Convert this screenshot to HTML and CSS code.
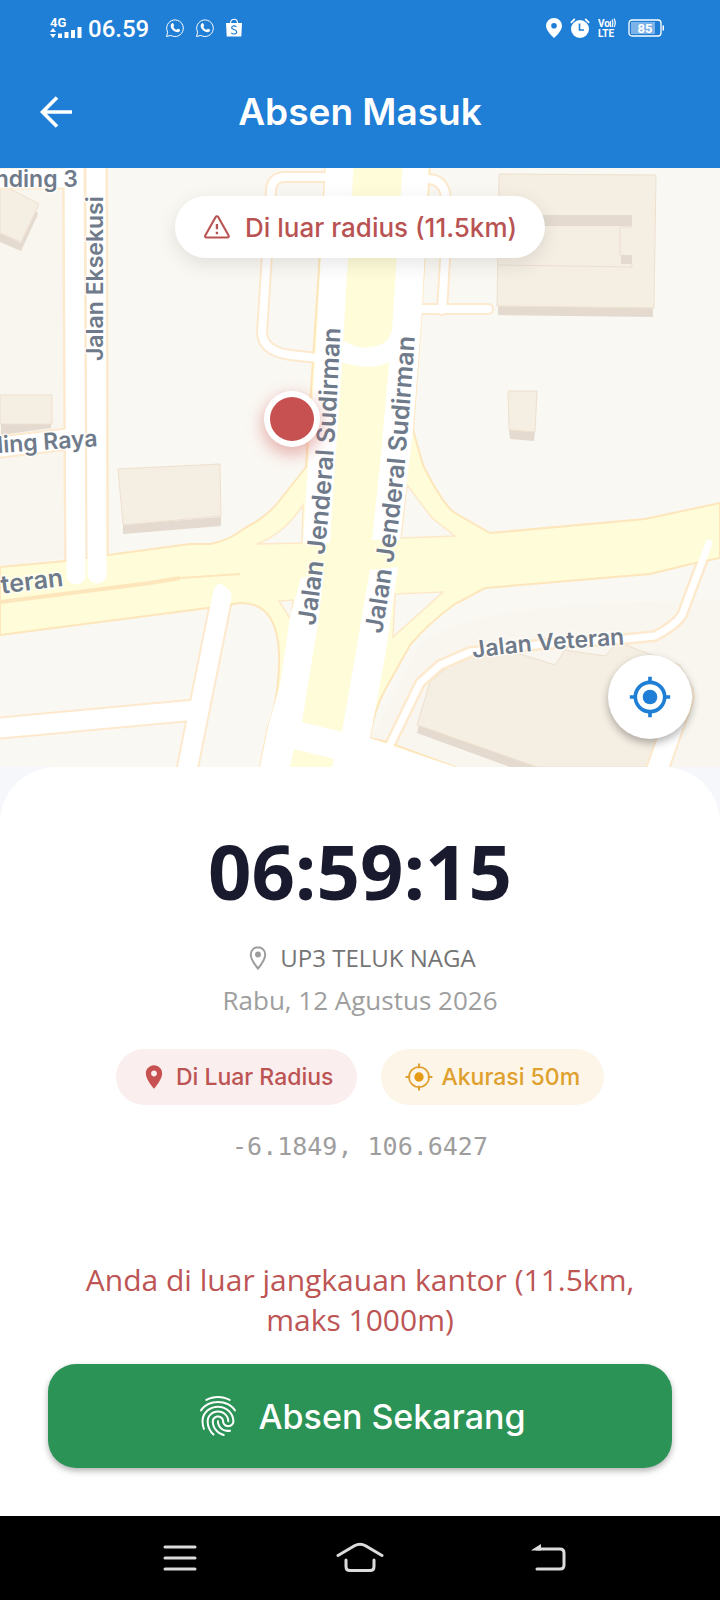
FILE: index.html
```html
<!DOCTYPE html>
<html lang="id">
<head>
<meta charset="utf-8">
<meta name="viewport" content="width=device-width, initial-scale=1">
<title>Absen Masuk</title>
<link rel="stylesheet" href="styles.css">
</head>
<body>
<div class="screen">
  <header class="top">
    <div class="status">
      <div class="status-left">
        <svg class="signal" viewBox="0 0 32 22" aria-hidden="true">
          <text class="signal-text" x="0" y="10">4G</text>
          <path fill="#fff" d="M0 15l3-4 3 4zM0 17l3 4 3-4zM8 16.500h4V21H8zM14.500 15h4v6h-4zM21 13h4v8h-4zM27.500 10h4v11h-4z"/>
        </svg>
        <span class="time">06.59</span>
        <svg class="wa" viewBox="0 0 20 20" aria-hidden="true"><path fill="none" stroke="#fff" stroke-width="1" d="M1.500 18.500l1.200-4.300A8.300 8.300 0 1 1 5.800 17.400z"/><path fill="#fff" d="M7 5.300c.6-.4 1.100-.2 1.400.5l.7 1.500c.2.600-.5 1.200-.8 1.600.8 1.500 1.800 2.300 3.200 2.900.5-.3.900-1.300 1.500-1.100l1.800.9c.5.300.3 1-.1 1.600-.9 1.200-2.500 1.300-4.200.6-2.300-1-4-2.800-4.700-4.900-.4-1.400.1-2.900 1.200-3.600z"/></svg>
        <svg class="wa" viewBox="0 0 20 20" aria-hidden="true"><path fill="none" stroke="#fff" stroke-width="1" d="M1.500 18.500l1.200-4.300A8.300 8.300 0 1 1 5.800 17.400z"/><path fill="#fff" d="M7 5.300c.6-.4 1.100-.2 1.400.5l.7 1.500c.2.600-.5 1.200-.8 1.600.8 1.500 1.800 2.300 3.200 2.900.5-.3.900-1.300 1.500-1.100l1.800.9c.5.300.3 1-.1 1.600-.9 1.200-2.500 1.300-4.200.6-2.300-1-4-2.800-4.700-4.900-.4-1.400.1-2.900 1.200-3.600z"/></svg>
        <svg class="bag" viewBox="0 0 18 20" aria-hidden="true"><path fill="#fff" d="M1 5h16l-.7 13.500H1.700z"/><path fill="none" stroke="#fff" stroke-width="1.200" d="M5.500 5C5.500 0 12.500 0 12.500 5"/><path fill="none" stroke="#1f7ed5" stroke-width="1.200" d="M11.500 8.700C9 7 6.300 8 6.700 10c.4 1.700 5 1.500 5 4 0 2.200-3.400 2.600-5.400 1"/></svg>
      </div>
      <div class="status-right">
        <svg class="st-pin" viewBox="0 0 16 20" aria-hidden="true"><path fill="#fff" fill-rule="evenodd" d="M8 0a8 8 0 0 0-8 8c0 5 8 12 8 12s8-7 8-12a8 8 0 0 0-8-8zm0 5a2.800 2.800 0 1 1 0 5.600A2.800 2.800 0 0 1 8 5z"/></svg>
        <svg class="st-alarm" viewBox="0 0 20 20" aria-hidden="true"><circle cx="10" cy="11" r="9" fill="#fff"/><path fill="none" stroke="#fff" stroke-width="1.800" d="M.8 4.800l4-4M19.200 4.800l-4-4"/><path fill="none" stroke="#1f7ed5" stroke-width="1.600" d="M9.500 5.500v6.500h4.500"/></svg>
        <svg class="st-volte" viewBox="0 0 18 20" aria-hidden="true"><text class="volte-text" x="0" y="9">Vo</text><text class="volte-text" x="0" y="19">LTE</text><path fill="none" stroke="#fff" stroke-width="1.200" d="M12.500 3v6M14 1.500c1 2 1 5 0 7.500M16 .5c1.600 3 1.600 6 0 8.500"/></svg>
        <svg class="st-bat" viewBox="0 0 36 18" aria-hidden="true"><rect x="1" y="1" width="32" height="16" rx="3" fill="none" stroke="#fff" stroke-width="1.300"/><rect x="3" y="3" width="24" height="12" fill="#7cb2e8"/><rect x="34.500" y="6.500" width="1.500" height="5" fill="#fff"/><text class="bat-text" x="17" y="14">85</text></svg>
      </div>
    </div>
    <div class="appbar">
      <button class="back" type="button" aria-label="Kembali"><svg viewBox="0 0 32 32" aria-hidden="true"><path fill="none" stroke="#fff" stroke-width="3.600" d="M32 16H3M17 1.500L2.500 16 17 30.500"/></svg></button>
      <h1 class="title">Absen Masuk</h1>
    </div>
  </header>

  <section class="map" aria-label="Peta">
    <svg class="map-art" viewBox="0 168 720 599" preserveAspectRatio="xMidYMid slice" aria-hidden="true">
      <defs>
        <filter id="soft" x="-50%" y="-50%" width="200%" height="200%"><feGaussianBlur stdDeviation="8"/></filter>
        <path id="sud1" d="M315 626C323 572 331 500 335 430S340 345 342 290"/>
        <path id="sud2" d="M382 634C392 575 401 510 406 450S413 370 417 300"/>
        <path id="vet" d="M473 658C520 651 575 648 660 642"/>
      </defs>
      <rect y="168" width="720" height="599" fill="#faf8f3"/>
      <path fill="#f8f6ef" d="M0 168h63v390L0 567zM372 738l48-95c60-35 130-39 300-43v167H455z"/>
      <!-- buildings -->
      <g class="shade">
        <path d="M0 233l21 10 15-32 2 3-17 37-21-9zM1 424h50v4l-50 7zM123 525l98-8v9l-98 8zM498 306l155 2v9l-155-2zM509 430l26 2-1 9-24-2zM419 725l120 42h-29l-93-34z"/>
      </g>
      <g class="block">
        <path d="M0 186l12 4 27 14-18 38-21-9zM0 395h52v29H0zM118 469l102-5 1 52-98 9zM499 174l157 1-2 133-157-2zM508 391h29l-2 41-26-2zM417 725l13-43 20-17 30-13 40 2 35 11 10-15 40 6 10-11h10l55 20 14 25-42 77H537z"/>
      </g>
      <path class="shade" d="M499 215h133v11H499zM621 255h11v9h-11z"/>
      <path fill="none" stroke="#ecdfce" d="M632 226v1h-12v28h1M632 264v3l-134-2"/>
      <!-- road casings -->
      <g class="casing">
        <path stroke-width="23" d="M0 178h66M0 447l76-9M0 728l195-18M222 596l-36 179"/>
        <path stroke-width="24" d="M74 160l2 412M96 160l1 412"/>
        <path stroke-width="12" d="M330 177h-45q-13 0-14 13l-4 65-5 78q1 18 28 22l28 3M428 179q13 0 17 13t-3 118M422 309h66"/>
        <path stroke-width="12" d="M709 543l-27 72q-6 10-27 21l-30 3-80 5-75 8-30 13-20 18-32 66"/>
        <path stroke-width="24" d="M683 697l-27 76"/>
      </g>
      <!-- main roads -->
      <path class="yellow" d="M0 567l65-6 43-6 82-11h20q18-3 35-16 22-11 35-28l26-33L326 160h104l-9 160-8 110 10 35q20 40 32 48l35 20 155-14 75-16v55l-25 5-45 11-165 14-30 16q-25 18-45 41l-25 45q-11 20-15 48l17 4 68 25H260l8-40q10-25 11-62 2-63-39-62l-32 5L0 635z"/>
      <path fill="#faf8f3" stroke="#fde9c9" stroke-width="1.500" d="M303 505q-18 28-46 39l45-1zM407 485l25 33 23 18-54 2zM395 594l48-2-50 45zM279 601l14-1-2 20z"/>
      <path fill="none" stroke="#fde6bb" stroke-width="4" d="M0 602l150-19 30-5"/>
      <path fill="none" stroke="#fde6bb" stroke-width="2" d="M180 578l60-4"/>
      <!-- white streets -->
      <g fill="#fff">
        <path d="M326 160h28l-8 130-4 75-7 100-5 78h-27l5-78 8-115zM403 160h26l-7 150-9 120-13 110h-28l8-75 12-135zM301 578l23-5-6 50-16 99 40 10 28-162 28-3-12 85-16 86 20 7 65 22H260l8-40 12-42 10-68z"/>
        <path d="M344 341q20 12 40 2 8-6 9-20l5 10-6 28q-22 11-51 1z"/>
      </g>
      <path fill="#fffcd9" d="M294 749l40 10-2 8h-42z"/>
      <g class="street">
        <path stroke-width="19" d="M0 178h66M0 447l76-9M0 728l195-18M222 596l-36 179"/>
        <path stroke-width="19" d="M74 160l2 415M96 160l1 414"/>
        <path stroke-width="8" d="M330 177h-45q-13 0-14 13l-4 65-5 78q1 18 28 22l28 3M428 179q13 0 17 13t-3 118M422 309h66"/>
        <path stroke-width="7" d="M709 543l-27 72q-6 10-27 21l-30 3-80 5-75 8-30 13-20 18-32 66"/>
        <path stroke-width="20" d="M683 697l-27 76"/>
        <path stroke-width="12" d="M220 590v8"/>
      </g>
      <!-- street names -->
      <g class="label">
        <text x="78" y="187" text-anchor="end">nding 3</text>
        <text transform="translate(103 361) rotate(-90)">Jalan Eksekusi</text>
        <text transform="translate(98 446) rotate(-4)" text-anchor="end">ling Raya</text>
        <text class="label-lg" transform="translate(64 586) rotate(-7)" text-anchor="end">teran</text>
        <text class="label-lg"><textPath href="#sud1">Jalan Jenderal Sudirman</textPath></text>
        <text class="label-lg"><textPath href="#sud2">Jalan Jenderal Sudirman</textPath></text>
        <text><textPath href="#vet">Jalan Veteran</textPath></text>
      </g>
      <!-- user position -->
      <circle cx="292" cy="425" r="30" fill="#c75150" opacity=".4" filter="url(#soft)"/>
      <circle cx="292" cy="419" r="28" fill="#fff"/>
      <circle cx="292" cy="419" r="22" fill="#c75150"/>
    </svg>
    <div class="alert" role="status">
      <svg class="alert-icon" viewBox="0 0 24 24" aria-hidden="true"><path fill="none" stroke="#b95353" stroke-width="1.800" stroke-linejoin="round" d="M10.900 3.500L2 19.300c-.5.900.1 1.700 1.100 1.700h17.800c1 0 1.600-.8 1.100-1.700L13.100 3.500c-.5-.9-1.700-.9-2.200 0z"/><path fill="none" stroke="#b95353" stroke-width="2" d="M12 9.500v4.500M12 16v2.200"/></svg>
      <span>Di luar radius (11.5km)</span>
    </div>
    <button class="locate" type="button" aria-label="Lokasi saya">
      <svg viewBox="0 0 24 24" aria-hidden="true"><circle cx="12" cy="12" r="4" fill="#1f7ed5"/><circle cx="12" cy="12" r="8" fill="none" stroke="#1f7ed5" stroke-width="2"/><path stroke="#1f7ed5" stroke-width="2" d="M12 1v3M12 20v3M1 12h3M20 12h3"/></svg>
    </button>
  </section>

  <main class="sheet">
    <div class="clock">06:59:15</div>
    <div class="place">
      <svg viewBox="0 0 24 24" aria-hidden="true"><path fill="none" stroke="#9c9c9c" stroke-width="1.700" d="M12 2.800c-3.500 0-6.200 2.700-6.200 6.200 0 4.600 6.200 12 6.200 12s6.200-7.400 6.200-12c0-3.500-2.700-6.200-6.200-6.200z"/><circle cx="12" cy="9" r="2.500" fill="#9c9c9c"/></svg>
      <span>UP3 TELUK NAGA</span>
    </div>
    <div class="date">Rabu, 12 Agustus 2026</div>
    <div class="chips">
      <div class="chip chip-red">
        <svg viewBox="0 0 24 24" aria-hidden="true"><path fill="#c75150" d="M12 2C8.130 2 5 5.130 5 9c0 5.250 7 13 7 13s7-7.750 7-13c0-3.870-3.130-7-7-7zm0 9.500c-1.380 0-2.500-1.120-2.500-2.500s1.120-2.500 2.500-2.500 2.500 1.120 2.500 2.500-1.120 2.500-2.500 2.500z"/></svg>
        <span>Di Luar Radius</span>
      </div>
      <div class="chip chip-amber">
        <svg viewBox="0 0 24 24" aria-hidden="true"><circle cx="12" cy="12" r="4" fill="#e59b18"/><circle cx="12" cy="12" r="8.600" fill="none" stroke="#e0a030" stroke-width="1.400"/><path stroke="#e0a030" stroke-width="1.700" d="M12 .5v4M12 19.500v4M.5 12h4M19.500 12h4"/></svg>
        <span>Akurasi 50m</span>
      </div>
    </div>
    <div class="coords">-6.1849, 106.6427</div>
    <p class="warning">Anda di luar jangkauan kantor (11.5km, maks 1000m)</p>
    <button class="submit" type="button">
      <svg viewBox="0 0 24 24" aria-hidden="true"><path fill="#fff" d="M17.810 4.470c-.08 0-.16-.02-.23-.06C15.660 3.420 14 3 12.010 3c-1.980 0-3.860.47-5.570 1.410-.24.13-.54.04-.68-.2-.13-.24-.04-.55.2-.68C7.820 2.520 9.860 2 12.010 2c2.130 0 3.990.47 6.030 1.520.25.13.34.43.21.67-.09.18-.26.28-.44.28zM3.500 9.720c-.1 0-.2-.03-.29-.09-.23-.16-.28-.47-.12-.7.99-1.400 2.250-2.500 3.750-3.270C9.980 4.040 14 4.030 17.150 5.650c1.500.77 2.760 1.860 3.750 3.250.16.22.11.54-.12.7-.23.16-.54.11-.7-.12-.9-1.260-2.040-2.250-3.390-2.940-2.870-1.470-6.540-1.470-9.400.01-1.360.7-2.500 1.700-3.400 2.960-.08.14-.23.21-.39.21zm6.250 12.070c-.13 0-.26-.05-.35-.15-.87-.87-1.340-1.430-2.010-2.640-.69-1.230-1.050-2.730-1.050-4.340 0-2.970 2.540-5.390 5.660-5.390s5.660 2.420 5.660 5.390c0 .28-.22.5-.5.5s-.5-.22-.5-.5c0-2.420-2.090-4.390-4.660-4.390-2.570 0-4.660 1.970-4.660 4.390 0 1.440.32 2.770.93 3.850.64 1.150 1.080 1.640 1.850 2.420.19.2.19.51 0 .71-.11.1-.24.15-.37.15zm7.170-1.850c-1.190 0-2.240-.3-3.100-.89-1.490-1.010-2.380-2.650-2.380-4.390 0-.28.22-.5.5-.5s.5.22.5.5c0 1.410.72 2.740 1.940 3.560.71.48 1.540.71 2.540.71.24 0 .64-.03 1.040-.1.27-.05.53.13.58.41.05.27-.13.53-.41.58-.57.11-1.070.12-1.210.12zM14.910 22c-.04 0-.09-.01-.13-.02-1.590-.44-2.630-1.030-3.720-2.100-1.400-1.390-2.170-3.240-2.170-5.220 0-1.620 1.380-2.940 3.080-2.940 1.700 0 3.080 1.320 3.080 2.940 0 1.070.93 1.940 2.080 1.940s2.080-.87 2.080-1.940c0-3.770-3.250-6.830-7.250-6.830-2.840 0-5.440 1.580-6.610 4.030-.39.81-.59 1.760-.59 2.800 0 .78.07 2.010.67 3.610.1.26-.03.55-.29.64-.26.1-.55-.04-.64-.29-.49-1.310-.73-2.610-.73-3.960 0-1.200.23-2.290.68-3.240 1.330-2.790 4.280-4.600 7.510-4.600 4.550 0 8.250 3.510 8.250 7.830 0 1.620-1.380 2.940-3.080 2.940s-3.080-1.320-3.080-2.940c0-1.070-.93-1.940-2.080-1.940s-2.080.87-2.080 1.940c0 1.710.66 3.310 1.870 4.510.95.94 1.860 1.460 3.270 1.850.27.07.42.35.35.61-.05.23-.26.38-.47.38z"/></svg>
      <span>Absen Sekarang</span>
    </button>
  </main>

  <nav class="navbar" aria-label="Navigasi sistem">
    <button type="button" aria-label="Menu"><svg viewBox="0 0 48 32"><path d="M11 5h30M11 16h30M11 27h30"/></svg></button>
    <button type="button" aria-label="Beranda"><svg viewBox="0 0 48 32"><path d="M2 13.500L18.500 3.800q5.500-3.300 11 0L46 13.500M10 18v6.500q0 4 4 4h20q4 0 4-4V18"/></svg></button>
    <button type="button" aria-label="Balik"><svg viewBox="0 0 48 32"><path d="M19 27h23q4 0 4-4V11q0-4-4-4H19"/><path class="tip" d="M13.500 8L23 2v6.500h-9.500z"/></svg></button>
  </nav>
</div>
</body>
</html>
```

FILE: styles.css
```css
* { box-sizing: border-box; }
body {
  margin: 0;
  background: #f5f7fa;
  font-family: "Open Sans", "Noto Sans", sans-serif;
}
button {
  border: 0;
  padding: 0;
  font-family: inherit;
  cursor: pointer;
}
svg { display: block; flex: none; }

.screen {
  min-height: 100vh;
  display: flex;
  flex-direction: column;
}

.top { background: #1f7ed5; color: #fff; }
.status {
  height: 56px;
  padding: 0 56px 0 50px;
  display: flex;
  justify-content: space-between;
  align-items: center;
}
.status-left, .status-right { display: flex; align-items: center; }
.signal { width: 32px; height: 22px; overflow: visible; }
.signal-text { font: 700 13px Roboto, sans-serif; fill: #fff; }
.time {
  margin: 0 16px 0 6px;
  padding-top: 2px;
  font: 500 24px/32px Roboto, sans-serif;
}
.wa { width: 20px; height: 20px; margin-right: 10px; }
.bag { width: 18px; height: 20px; }
.status-right { gap: 8px; }
.st-pin { width: 16px; height: 20px; }
.st-alarm { width: 20px; height: 20px; }
.st-volte { width: 18px; height: 20px; }
.volte-text { font: 700 10px Roboto, sans-serif; fill: #fff; }
.st-bat { width: 36px; height: 18px; margin-left: 4px; }
.bat-text { font: 700 13px Roboto, sans-serif; fill: #fff; text-anchor: middle; }

.appbar {
  height: 112px;
  padding: 0 40px;
  display: grid;
  grid-template-columns: 32px 1fr 32px;
  align-items: center;
}
.back { background: none; }
.back svg { width: 32px; height: 32px; }
.title {
  margin: 0;
  text-align: center;
  font-family: Inter, sans-serif;
  font-size: 37px;
  line-height: 48px;
  font-weight: 600;
}

.map {
  position: relative;
  flex: 1;
  min-height: 400px;
  overflow: hidden;
}
.map-art { position: absolute; inset: 0; width: 100%; height: 100%; }
.block { fill: #f5eee3; stroke: #eee0ce; }
.shade { fill: #e4dacf; }
.casing { fill: none; stroke: #fde9cd; stroke-linecap: round; stroke-linejoin: round; }
.street { fill: none; stroke: #fff; stroke-linecap: round; stroke-linejoin: round; }
.yellow { fill: #fffcd9; stroke: #fde6bb; stroke-width: 2px; }
.label {
  font: 600 23px Inter, sans-serif;
  fill: #6f7b8a;
  stroke: #fff;
  stroke-width: 3px;
  stroke-opacity: .7;
  paint-order: stroke;
}
.label-lg { font-size: 25px; }

.alert {
  position: absolute;
  top: 28px;
  left: 50%;
  transform: translateX(-50%);
  height: 62px;
  padding: 0 28px;
  border-radius: 31px;
  background: #fff;
  box-shadow: 0 6px 20px rgba(0, 0, 0, .1);
  display: flex;
  align-items: center;
  gap: 14px;
  white-space: nowrap;
  color: #b95353;
  font-family: Inter, sans-serif;
  font-size: 26px;
  font-weight: 500;
}
.alert-icon { width: 28px; height: 28px; }
.locate {
  position: absolute;
  right: 28px;
  bottom: 28px;
  width: 84px;
  height: 84px;
  border-radius: 50%;
  background: #fff;
  box-shadow: 0 4px 8px rgba(0, 0, 0, .3);
  display: grid;
  place-items: center;
}
.locate svg { width: 44px; height: 44px; }

.sheet {
  padding: 58px 48px 48px;
  border-radius: 56px 56px 0 0;
  background: #fff;
  display: flex;
  flex-direction: column;
  align-items: center;
}
.clock {
  color: #1a1a2e;
  font-size: 76px;
  line-height: 92px;
  font-weight: 700;
}
.place {
  margin-top: 23px;
  display: flex;
  align-items: center;
  gap: 8px;
  color: #757575;
  font-size: 24px;
  line-height: 36px;
}
.place svg { width: 28px; height: 28px; }
.date {
  margin-top: 6px;
  color: #9e9e9e;
  font-size: 26px;
  line-height: 36px;
}
.chips { margin-top: 31px; display: flex; gap: 24px; }
.chip {
  height: 56px;
  padding: 0 24px;
  border-radius: 28px;
  display: flex;
  align-items: center;
  gap: 8px;
  font-family: Inter, sans-serif;
  font-size: 23px;
  font-weight: 500;
}
.chip svg { width: 28px; height: 28px; }
.chip-red { background: #faeeee; color: #bc5454; }
.chip-amber { background: #fdf5e7; color: #dfa02e; }
.coords {
  margin-top: 24px;
  color: #9e9e9e;
  font: 25px/36px "DejaVu Sans Mono", monospace;
}
.warning {
  margin: 95px 0 24px;
  max-width: 600px;
  text-align: center;
  color: #bd5555;
  font-size: 30px;
  line-height: 40px;
}
.submit {
  align-self: stretch;
  height: 104px;
  border-radius: 28px;
  background: #2b9355;
  color: #fff;
  box-shadow: 0 3px 6px rgba(0, 0, 0, .3);
  display: flex;
  align-items: center;
  justify-content: center;
  gap: 16px;
  font-family: Inter, sans-serif;
  font-size: 34px;
  font-weight: 500;
}
.submit svg { width: 48px; height: 48px; }

.navbar {
  height: 84px;
  padding: 0 154px;
  background: #000;
  display: flex;
  align-items: center;
  justify-content: space-between;
}
.navbar button { background: none; }
.navbar svg {
  width: 48px;
  height: 32px;
  fill: none;
  stroke: #dcdcdc;
  stroke-width: 3px;
  stroke-linecap: round;
}
.navbar .tip { fill: #dcdcdc; stroke: none; }
```
